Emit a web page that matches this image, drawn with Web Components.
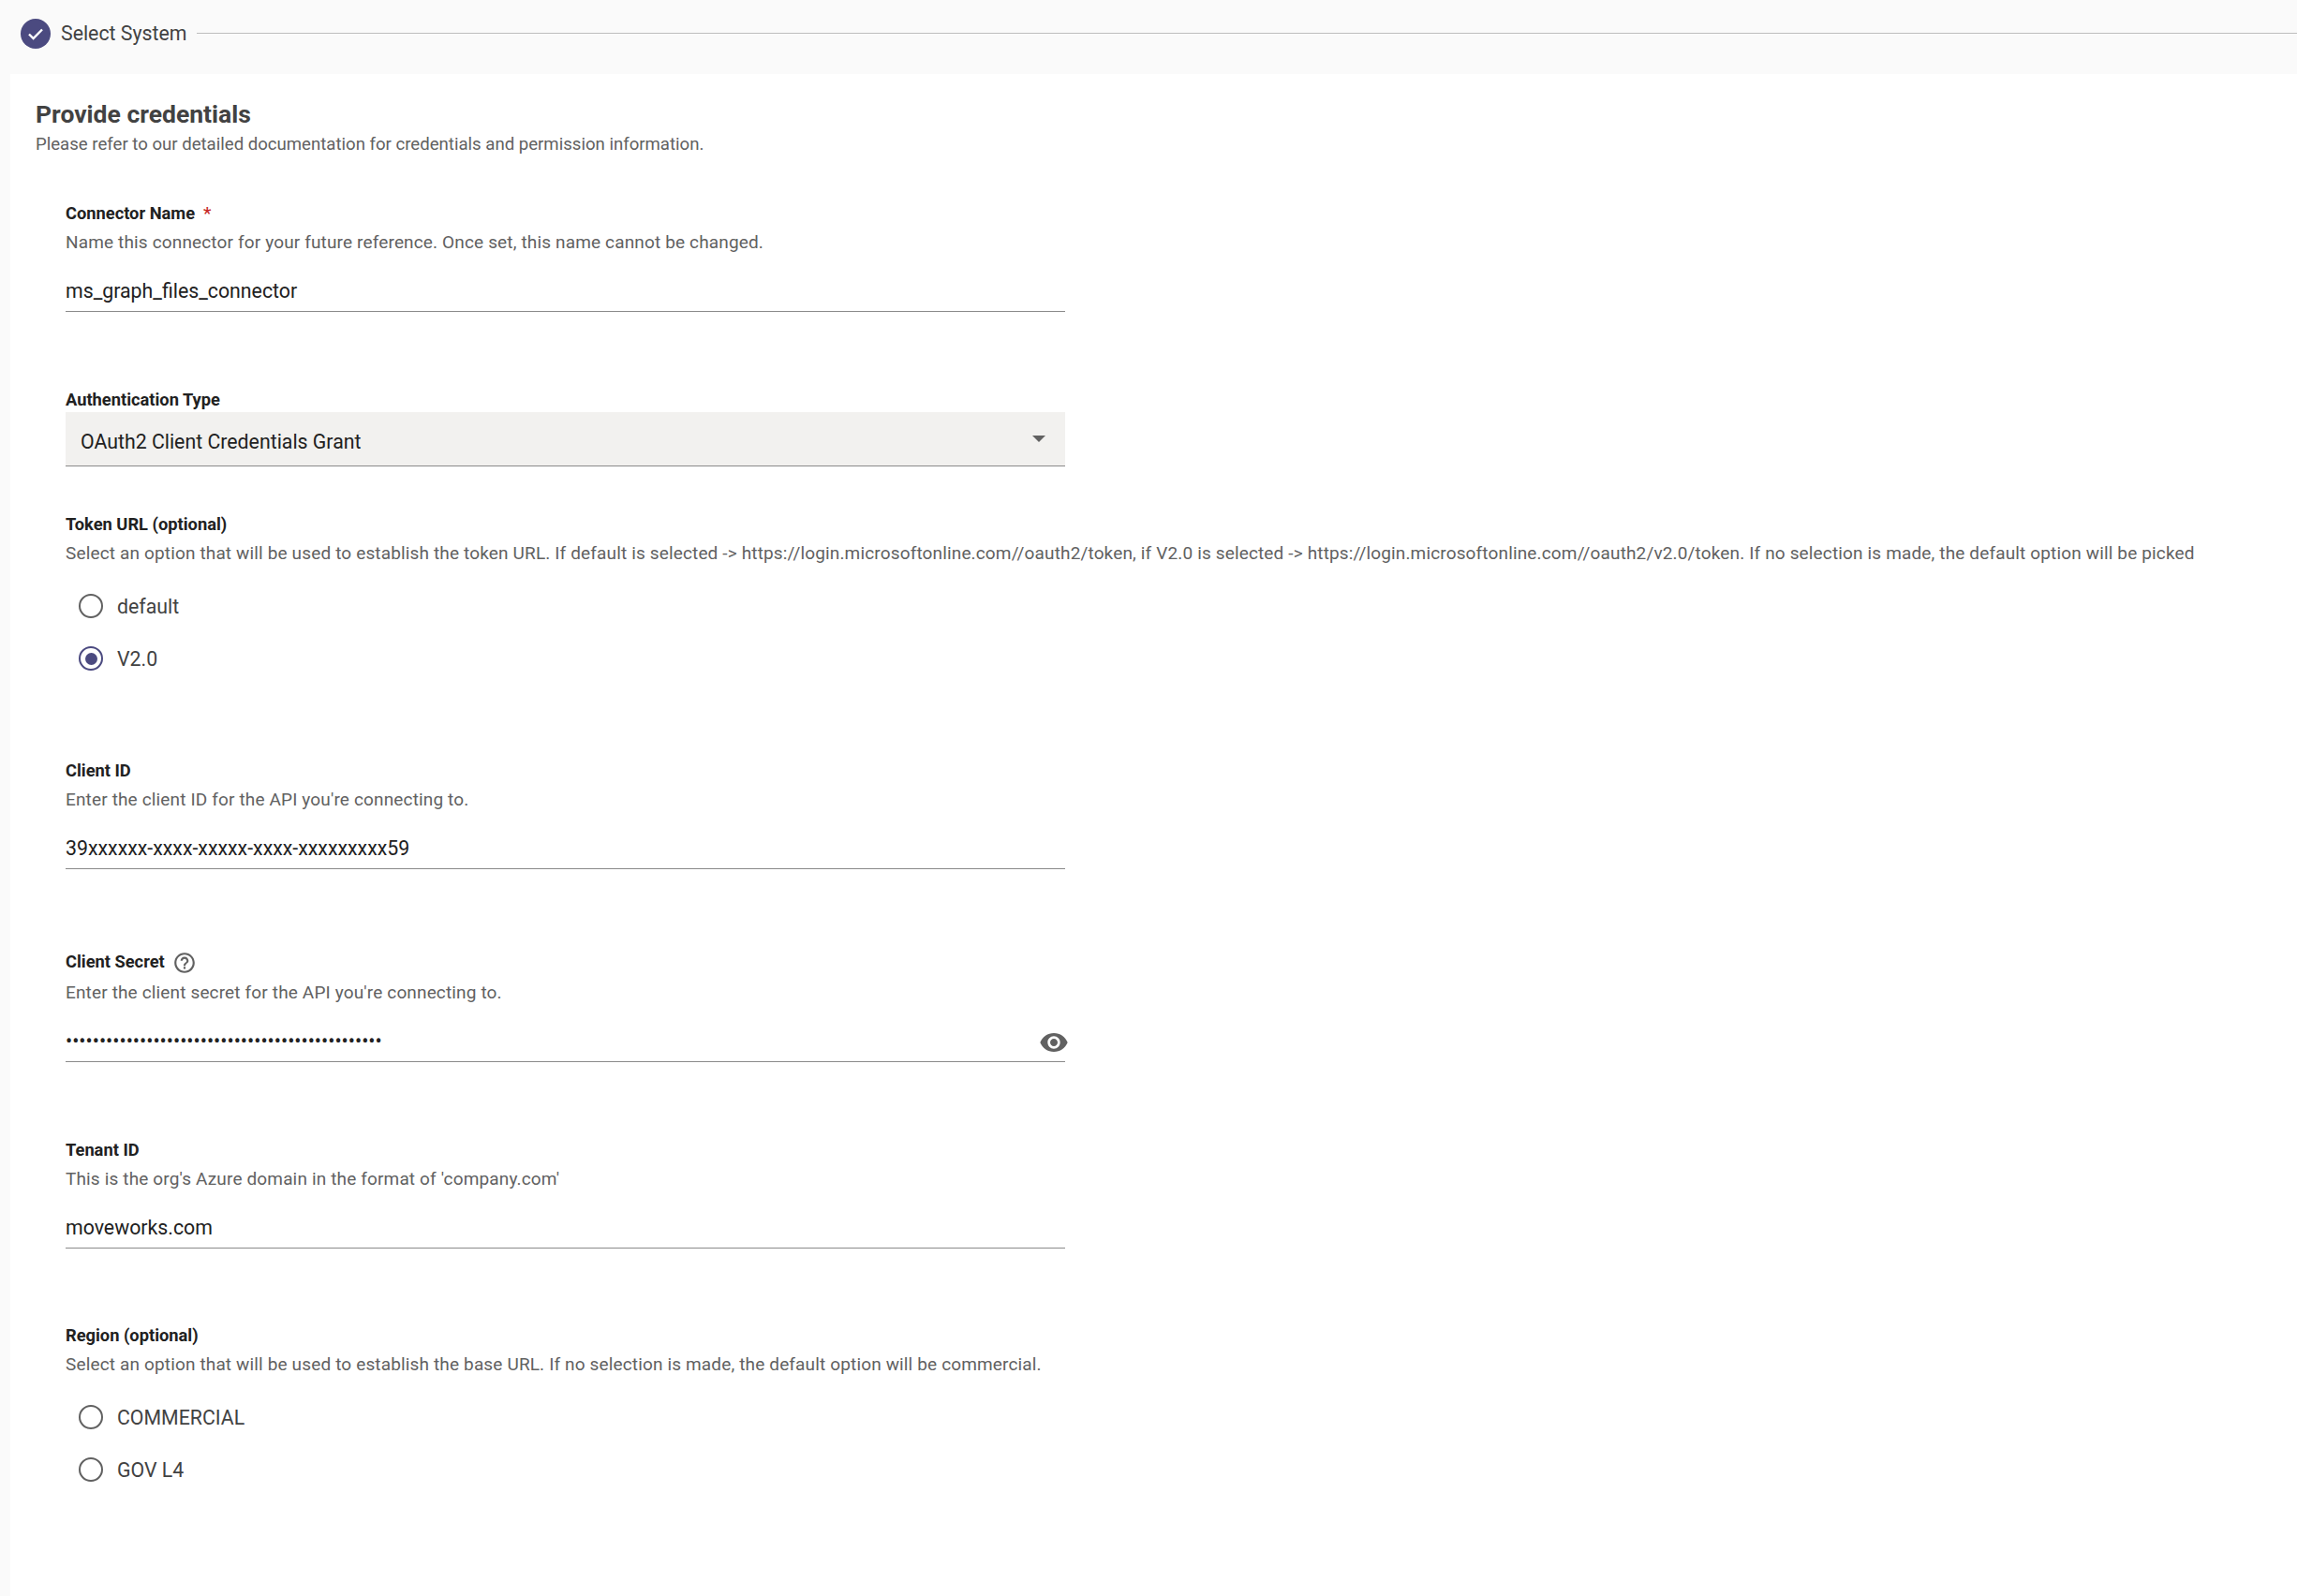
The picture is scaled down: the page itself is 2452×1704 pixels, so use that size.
<!DOCTYPE html>
<html>
<head>
<meta charset="utf-8">
<title>Provide credentials</title>
<style>
  html, body { margin: 0; padding: 0; background: #fafafa; }
  body { font-family: Roboto, "Liberation Sans", sans-serif; width: 2452px; height: 1704px; overflow: hidden; }
</style>
</head>
<body>
<connector-page>
  <step-header slot="header">Select System</step-header>
  <credentials-card heading="Provide credentials" sub="Please refer to our detailed documentation for credentials and permission information.">
    <form-field style="margin-top:51px" label="Connector Name" required desc="Name this connector for your future reference. Once set, this name cannot be changed.">
      <text-input value="ms_graph_files_connector"></text-input>
    </form-field>
    <form-field style="margin-top:83px" label="Authentication Type">
      <select-input value="OAuth2 Client Credentials Grant"></select-input>
    </form-field>
    <form-field style="margin-top:51px" label="Token URL (optional)" desc="Select an option that will be used to establish the token URL. If default is selected -> https://login.microsoftonline.com//oauth2/token, if V2.0 is selected -> https://login.microsoftonline.com//oauth2/v2.0/token. If no selection is made, the default option will be picked">
      <radio-option>default</radio-option>
      <radio-option checked>V2.0</radio-option>
    </form-field>
    <form-field style="margin-top:81px" label="Client ID" desc="Enter the client ID for the API you're connecting to.">
      <text-input value="39xxxxxx-xxxx-xxxxx-xxxx-xxxxxxxxx59"></text-input>
    </form-field>
    <form-field style="margin-top:86px" label="Client Secret" help desc="Enter the client secret for the API you're connecting to.">
      <text-input type="password" value="•••••••••••••••••••••••••••••••••••••••••••••••"></text-input>
    </form-field>
    <form-field style="margin-top:83px" label="Tenant ID" desc="This is the org's Azure domain in the format of 'company.com'">
      <text-input value="moveworks.com"></text-input>
    </form-field>
    <form-field style="margin-top:82px" label="Region (optional)" desc="Select an option that will be used to establish the base URL. If no selection is made, the default option will be commercial.">
      <radio-option>COMMERCIAL</radio-option>
      <radio-option>GOV L4</radio-option>
    </form-field>
  </credentials-card>
</connector-page>

<script>
class ConnectorPage extends HTMLElement {
  constructor() {
    super();
    this.attachShadow({ mode: 'open' });
    this.shadowRoot.innerHTML = `
      <style>
        :host { display: flex; flex-direction: column; height: 1704px; background: #fafafa; }
      </style>
      <slot name="header"></slot>
      <slot></slot>
    `;
  }
}

class StepHeader extends HTMLElement {
  constructor() {
    super();
    this.attachShadow({ mode: 'open' });
    this.shadowRoot.innerHTML = `
      <style>
        :host { display: flex; align-items: center; height: 79px; padding: 0 0 8px 22px; box-sizing: border-box; }
        .check { width: 32px; height: 32px; border-radius: 50%; background: #4b4a80; display: flex; align-items: center; justify-content: center; flex: none; }
        .name { margin-left: 11px; font-size: 21.3px; color: #424242; white-space: nowrap; }
        .line { flex: 1; height: 1px; background: #bdbdbd; margin-left: 11px; }
      </style>
      <div class="check">
        <svg width="24" height="24" viewBox="0 0 24 24"><path fill="none" stroke="#fff" stroke-width="2.4" d="M5 12.5l4.6 4.6L19 7.5"/></svg>
      </div>
      <span class="name"><slot></slot></span>
      <div class="line"></div>
    `;
  }
}

class CredentialsCard extends HTMLElement {
  constructor() {
    super();
    this.attachShadow({ mode: 'open' });
    this.shadowRoot.innerHTML = `
      <style>
        :host { display: block; flex: 1; margin-left: 11px; background: #fff; padding: 28px 0 0 27px; }
        h2 { margin: 0; font-size: 26.5px; line-height: 30px; font-weight: 700; color: #424242; }
        p { margin: 5px 0 0; font-size: 18.6px; line-height: 24px; color: #616161; }
        .fields { display: flex; flex-direction: column; padding-left: 32px; }
      </style>
      <h2>${this.getAttribute('heading')}</h2>
      <p>${this.getAttribute('sub')}</p>
      <div class="fields"><slot></slot></div>
    `;
  }
}

class FormField extends HTMLElement {
  constructor() {
    super();
    this.attachShadow({ mode: 'open' });
    const desc = this.getAttribute('desc');
    const mark = this.hasAttribute('required') ? '<span class="req">*</span>' : '';
    const help = this.hasAttribute('help')
      ? '<svg class="help" width="26" height="26" viewBox="0 0 24 24"><path fill="#616161" d="M11 18h2v-2h-2v2zm1-16C6.48 2 2 6.48 2 12s4.48 10 10 10 10-4.48 10-10S17.52 2 12 2zm0 18c-4.41 0-8-3.59-8-8s3.59-8 8-8 8 3.59 8 8-3.59 8-8 8zm0-14c-2.21 0-4 1.79-4 4h2c0-1.1.9-2 2-2s2 .9 2 2c0 2-3 1.75-3 5h2c0-2.25 3-2.5 3-5 0-2.21-1.79-4-4-4z"/></svg>'
      : '';
    this.shadowRoot.innerHTML = `
      <style>
        :host { display: block; }
        .label { display: flex; align-items: center; font-size: 18.3px; line-height: 22px; font-weight: 700; color: #212121; }
        .req { color: #c62828; margin-left: 9px; font-size: 19px; font-weight: 500; }
        .help { margin-left: 8px; margin-top: 2px; }
        :host([help]) .label { height: 26px; }
        .desc { margin-top: 9px; font-size: 19px; letter-spacing: 0.15px; line-height: 22px; color: #616161; white-space: nowrap; }
        ::slotted(radio-option:first-of-type) { margin-top: 17px; }
      </style>
      <div class="label"><span>${this.getAttribute('label')}</span>${mark}${help}</div>
      ${desc ? `<div class="desc">${desc.replace(/>/g, '&gt;')}</div>` : ''}
      <slot></slot>
    `;
  }
}

class TextInput extends HTMLElement {
  constructor() {
    super();
    this.attachShadow({ mode: 'open' });
    const eye = this.getAttribute('type') === 'password'
      ? '<svg class="eye" width="32" height="32" viewBox="0 0 24 24"><path fill="#616161" d="M12 4.5C7 4.5 2.73 7.61 1 12c1.73 4.39 6 7.5 11 7.5s9.27-3.11 11-7.5c-1.73-4.39-6-7.5-11-7.5zM12 17c-2.76 0-5-2.24-5-5s2.24-5 5-5 5 2.24 5 5-2.24 5-5 5zm0-8c-1.66 0-3 1.34-3 3s1.34 3 3 3 3-1.34 3-3-1.34-3-3-3z"/></svg>'
      : '';
    this.shadowRoot.innerHTML = `
      <style>
        :host { display: block; position: relative; width: 1067px; height: 42px; margin-top: 20px; border-bottom: 1.5px solid #8a8a8a; box-sizing: content-box; }
        .value { font-size: 21.3px; line-height: 42px; color: #212121; white-space: nowrap; }
        .eye { position: absolute; right: -4px; top: 6px; }
      </style>
      <div class="value">${this.getAttribute('value')}</div>
      ${eye}
    `;
  }
}

class SelectInput extends HTMLElement {
  constructor() {
    super();
    this.attachShadow({ mode: 'open' });
    this.shadowRoot.innerHTML = `
      <style>
        :host { display: flex; align-items: center; justify-content: space-between; width: 1067px; height: 58px; margin-top: 2px; padding: 0 16px; box-sizing: border-box; background: #f2f1ef; border-bottom: 1.5px solid #8a8a8a; }
        .value { font-size: 21.3px; color: #212121; padding-top: 6px; }
        .arrow { width: 0; height: 0; border-left: 7px solid transparent; border-right: 7px solid transparent; border-top: 7px solid #616161; margin-right: 5px; margin-bottom: 1px; }
      </style>
      <span class="value">${this.getAttribute('value')}</span>
      <span class="arrow"></span>
    `;
  }
}

class RadioOption extends HTMLElement {
  constructor() {
    super();
    this.attachShadow({ mode: 'open' });
    const on = this.hasAttribute('checked');
    this.shadowRoot.innerHTML = `
      <style>
        :host { display: flex; align-items: center; height: 56px; padding-left: 14px; }
        .ring { width: 26px; height: 26px; box-sizing: border-box; border-radius: 50%; border: 2.5px solid ${on ? '#4b4a80' : '#616161'}; display: flex; align-items: center; justify-content: center; }
        .dot { width: 13px; height: 13px; border-radius: 50%; background: #4b4a80; }
        .text { margin-left: 15px; font-size: 21.3px; color: #424242; }
      </style>
      <span class="ring">${on ? '<span class="dot"></span>' : ''}</span>
      <span class="text"><slot></slot></span>
    `;
  }
}

customElements.define('connector-page', ConnectorPage);
customElements.define('step-header', StepHeader);
customElements.define('credentials-card', CredentialsCard);
customElements.define('form-field', FormField);
customElements.define('text-input', TextInput);
customElements.define('select-input', SelectInput);
customElements.define('radio-option', RadioOption);
</script>
</body>
</html>
